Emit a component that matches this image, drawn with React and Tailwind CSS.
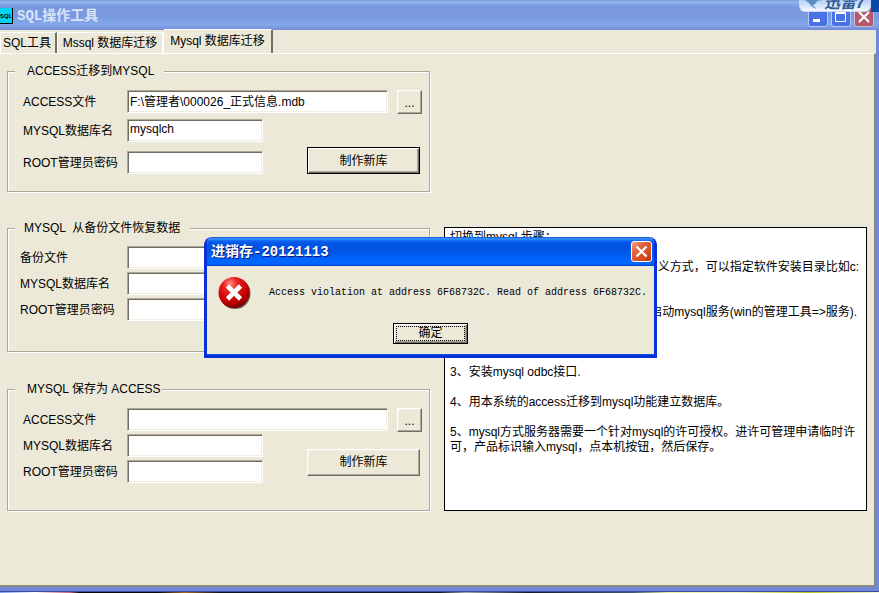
import React from 'react';
import { clsx } from 'clsx';

const raised =
  'border border-t-white border-l-white border-r-[#716f64] border-b-[#716f64] bg-[#ece9d8] shadow-[inset_-1px_-1px_0_#aca899,inset_1px_1px_0_#f1efe2]';

const sunken =
  'h-[23px] min-w-0 border border-t-[#aca899] border-l-[#aca899] border-r-white border-b-white bg-white pl-[2px] pb-[3px] text-xs leading-4 outline-none shadow-[inset_1px_1px_0_#716f64,inset_-1px_-1px_0_#f1efe2]';

const Tab = ({ children, active, className }) => (
  <button
    className={clsx(
      'border-t border-l border-white border-r-2 bg-[#ece9d8] whitespace-nowrap',
      active ? 'z-10 h-6 border-l-0 border-r-[#716f64] pb-[2px]' : 'h-[21px]',
      className
    )}
  >
    {children}
  </button>
);

const Field = ({ id, label, value = '', type = 'text', wide, labelClass = 'w-[104px]', children }) => (
  <div className="flex items-start">
    <label htmlFor={id} className={clsx('shrink-0 pt-1 leading-4 whitespace-nowrap', labelClass)}>
      {label}
    </label>
    <input id={id} type={type} defaultValue={value} className={clsx(sunken, wide ? 'flex-1' : 'w-[136px]')} />
    {children}
  </div>
);

const GroupBox = ({ title, legendClass, className, children }) => (
  <fieldset
    className={clsx(
      'border border-[#aca899] px-[7px] shadow-[1px_1px_0_white,inset_1px_1px_0_white]',
      className
    )}
  >
    <legend className={clsx('bg-[#ece9d8] leading-4 whitespace-pre', legendClass)}>{title}</legend>
    {children}
  </fieldset>
);

const BrowseButton = () => (
  <button aria-label="浏览" className={clsx(raised, 'ml-[9px] h-6 w-[25px] shrink-0 leading-6')}>
    ...
  </button>
);

const ErrorDialog = () => (
  <div
    role="dialog"
    aria-label="进销存-20121113"
    className="absolute top-[237px] left-[204px] z-20 w-[453px] overflow-hidden rounded-t-lg border-x-[3px] border-b-[3px] border-[#0831d9] bg-[#ece9d8] shadow-[inset_0_-1px_0_#0855dd]"
  >
    <div className="-mx-[3px] flex h-[29px] items-center justify-between bg-[linear-gradient(180deg,#0a4fd0_0%,#3a94ff_6%,#0a62f0_14%,#0054e3_24%,#0055e5_50%,#0066ff_80%,#0066ff_92%,#0045d0_100%)] pr-[5px] pl-[7px]">
      <h2 className="font-['Liberation_Mono','Noto_Sans_CJK_SC',monospace] text-sm font-bold text-white [text-shadow:1px_1px_0_#0a1883]">
        进销存-20121113
      </h2>
      <button
        aria-label="关闭"
        className="flex h-[21px] w-[21px] items-center justify-center rounded-[3px] border border-white bg-[linear-gradient(135deg,#f0a088_0%,#e2603c_35%,#d84a20_75%,#b83010_100%)]"
      >
        <svg width="13" height="13" viewBox="0 0 13 13" stroke="white" strokeWidth="2.2">
          <path d="M1.5 1.5l10 10M11.5 1.5l-10 10" />
        </svg>
      </button>
    </div>
    <div className="flex items-center gap-[18px] pt-[10px] pl-[11px]">
      <svg width="33" height="34" viewBox="0 0 33 34" className="shrink-0">
        <defs>
          <radialGradient id="ball" cx="38%" cy="22%" r="80%">
            <stop offset="0" stopColor="#ff8a80" />
            <stop offset="0.3" stopColor="#e82020" />
            <stop offset="0.7" stopColor="#c80000" />
            <stop offset="1" stopColor="#7a0000" />
          </radialGradient>
        </defs>
        <circle cx="17" cy="17.5" r="15.5" fill="#3c3830" opacity="0.8" />
        <circle cx="16" cy="16.5" r="15.5" fill="url(#ball)" />
        <path d="M9.5 10l13 13M22.5 10l-13 13" stroke="white" strokeWidth="4.6" />
      </svg>
      <p className="font-['Liberation_Mono',monospace] text-[10px] whitespace-nowrap">
        Access violation at address 6F68732C. Read of address 6F68732C.
      </p>
    </div>
    <div className="flex justify-center pt-[13px] pb-[11px]">
      <button className="h-[21px] w-[75px] border border-black bg-[#ece9d8] p-[2px] shadow-[inset_1px_1px_0_white,inset_-1px_-1px_0_#716f64,inset_-2px_-2px_0_#aca899]">
        <span className="block border border-dotted border-black leading-[13px]">确定</span>
      </button>
    </div>
  </div>
);

const TitleBar = () => (
  <header className="flex h-[30px] items-center bg-[linear-gradient(180deg,#7e9ee3_0%,#97b4e9_8%,#7c9fe2_17%,#7996de_30%,#7b99e1_56%,#82a9e9_82%,#7b96e1_94%,#6f88d4_100%)] pt-[2px] pr-[5px]">
    <div className="flex h-4 w-[13px] items-center border-r border-b border-black bg-cyan-400 font-['Liberation_Sans',sans-serif] text-[6px] font-bold">
      SQL
    </div>
    <h1 className="ml-1 font-['Liberation_Mono','Noto_Sans_CJK_SC',monospace] text-sm font-bold text-[#d8e4f8]">
      SQL操作工具
    </h1>
    <div className="ml-auto flex gap-[3px] pt-px">
      <button aria-label="最小化" className="flex h-5 w-5 rounded-[3px] border border-[#b8c8f4] bg-[#4a72e4]">
        <svg width="18" height="18" viewBox="0 0 18 18">
          <path d="M4 11h7v3H4z" fill="white" />
        </svg>
      </button>
      <button aria-label="最大化" className="flex h-5 w-5 rounded-[3px] border border-[#b8c8f4] bg-[#4a72e4]">
        <svg width="18" height="18" viewBox="0 0 18 18" fill="none" stroke="white">
          <path d="M3.5 4.5h10v9h-10zM3 5.5h11" />
        </svg>
      </button>
      <button aria-label="关闭窗口" className="flex h-5 w-5 rounded-[3px] border border-[#c8b8d8] bg-[#b45a6a]">
        <svg width="18" height="18" viewBox="0 0 18 18" stroke="white" strokeWidth="2.2">
          <path d="M4 4l10 10M14 4L4 14" />
        </svg>
      </button>
    </div>
  </header>
);

// Xunlei floating bar, docked to the top edge of the screen
const FloatingBar = () => (
  <div className="absolute top-0 right-0 z-20 flex h-3">
    <div className="flex w-[72px] items-end rounded-b-md border border-t-0 border-[#c8d8f0] bg-gradient-to-b from-[#b4d0f4] to-[#f4f9ff] pl-[5px]">
      <svg width="17" height="10" viewBox="0 0 17 10" className="shrink-0 self-start" fill="#5a8cc8">
        <path d="M0 0h17l-5 1c-1 3-3 4-5 4l3 2 1 2-5-3-2-3z" />
      </svg>
      <span className="ml-[2px] text-base leading-4 font-bold text-[#365a94] italic">迅雷7</span>
    </div>
    <div className="w-2 bg-[#0a48a8]" />
  </div>
);

const App = () => {
  return (
    <div className="relative flex min-h-screen flex-col overflow-hidden bg-[#ece9d8] font-['Liberation_Sans','Noto_Sans_CJK_SC',sans-serif] text-xs leading-4 text-black">
      <TitleBar />
      <FloatingBar />

      <div className="flex flex-1 flex-col border-r-[3px] border-[#7088dc]">
        {/* Tabs */}
        <nav className="flex h-[23px] items-end">
          <Tab className="w-[57px] border-r-[#716f64] pr-[2px]">SQL工具</Tab>
          <Tab className="w-[107px]">Mssql 数据库迁移</Tab>
          <Tab active className="w-[109px]">Mysql 数据库迁移</Tab>
        </nav>

        {/* Tab page */}
        <main className="grid flex-1 grid-cols-2 gap-[14px] border-t border-r-2 border-b-2 border-t-white border-r-[#8c897c] border-b-[#8c897c] pt-[9px] pr-[7px] pl-[7px]">
          <div className="min-w-0">
            <GroupBox title="ACCESS迁移到MYSQL" legendClass="pl-3 pr-[10px]" className="h-[129px]">
              <div className="pt-[11px] pl-2">
                <Field id="mdb" label="ACCESS文件" value="F:\管理者\000026_正式信息.mdb" wide>
                  <BrowseButton />
                </Field>
                <div className="flex items-end justify-between pt-[5px]">
                  <div className="flex flex-col gap-[9px]">
                    <Field id="db1" label="MYSQL数据库名" value="mysqlch" />
                    <Field id="pw1" label="ROOT管理员密码" type="password" />
                  </div>
                  <button className="mr-[2px] h-[27px] w-[113px] border border-black shadow-[inset_1px_1px_0_white,inset_-1px_-1px_0_#716f64,inset_-2px_-2px_0_#aca899]">
                    制作新库
                  </button>
                </div>
              </div>
            </GroupBox>

            <GroupBox
              title="MYSQL  从备份文件恢复数据"
              legendClass="pl-[9px] pr-[10px]"
              className="mt-[28px] h-[132px]"
            >
              <div className="flex flex-col gap-[3px] pt-[10px] pr-[34px] pl-[5px]">
                <Field id="bak" label="备份文件" labelClass="w-[107px]" wide />
                <Field id="db2" label="MYSQL数据库名" labelClass="w-[107px]" />
                <Field id="pw2" label="ROOT管理员密码" labelClass="w-[107px]" type="password" />
              </div>
            </GroupBox>

            <GroupBox title="MYSQL 保存为 ACCESS" legendClass="pl-3 pr-px" className="mt-[29px] h-[130px]">
              <div className="pt-[11px] pl-2">
                <Field id="out" label="ACCESS文件" wide>
                  <BrowseButton />
                </Field>
                <div className="flex items-center justify-between pt-[2px]">
                  <div className="flex flex-col gap-[3px]">
                    <Field id="db3" label="MYSQL数据库名" />
                    <Field id="pw3" label="ROOT管理员密码" type="password" />
                  </div>
                  <button className={clsx(raised, 'mt-[7px] mr-[2px] h-[27px] w-[113px]')}>制作新库</button>
                </div>
              </div>
            </GroupBox>
          </div>

          {/* Migration steps */}
          <section className="mt-[164px] h-[284px] min-w-0 border border-black bg-white pt-[2px] pl-[5px] leading-[15px]">
            <p>切换到mysql 步骤：</p>
            <p className="pt-[15px] pr-[7px] text-right">义方式，可以指定软件安装目录比如c:</p>
            <p className="pt-[30px] pr-[9px] text-right">启动mysql服务(win的管理工具=&gt;服务).</p>
            <p className="pt-[45px]">3、安装mysql odbc接口.</p>
            <p className="pt-[15px]">4、用本系统的access迁移到mysql功能建立数据库。</p>
            <p className="pt-[15px] pr-[6px]">
              5、mysql方式服务器需要一个针对mysql的许可授权。进许可管理申请临时许可，产品标识输入mysql，点本机按钮，然后保存。
            </p>
          </section>
        </main>
      </div>

      {/* Window frame and the desktop below it */}
      <footer>
        <div className="h-1 bg-[#7088dc]" />
        <div className="h-px bg-[#3c4ca0]" />
        <div className="h-px bg-[linear-gradient(90deg,#7c9cf0_0%,#ffffff_4%,#c06080_8%,#04060c_9%,#04060c_18%,#a86820_21%,#0a1020_25%,#10182c_50%,#a0a8b0_53%,#10182c_60%,#405870_72%,#e8f0a0_76%,#f0f4c0_84%,#b8c820_92%,#f4f8e0_100%)]" />
      </footer>

      <ErrorDialog />
    </div>
  );
};

export default App;
